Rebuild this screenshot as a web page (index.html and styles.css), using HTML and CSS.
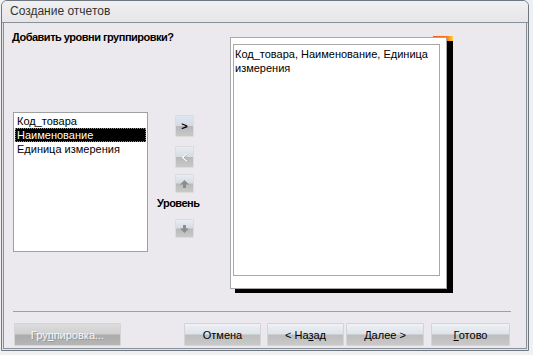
FILE: index.html
```html
<!DOCTYPE html>
<html lang="ru">
<head>
  <meta charset="UTF-8">
  <title>Создание отчетов</title>
  <link rel="stylesheet" href="styles.css">
</head>
<body>
  <div class="window">
    <div class="titlebar">Создание отчетов</div>
    <div class="client">
      <div class="main">
        <div class="fields">
          <div class="question">Добавить уровни группировки?</div>
          <ul class="listbox">
            <li>Код_товара</li>
            <li class="selected">Наименование</li>
            <li>Единица измерения</li>
          </ul>
        </div>
        <div class="controls">
          <button class="tool add">&gt;</button>
          <button class="tool remove">
            <svg width="8" height="9" viewBox="0 0 8 9"><path d="M6 1 L2 4.5 L6 8" fill="none" stroke="#fff" stroke-width="1.6"/><path d="M6.5 1.6 L2.9 4.5 L6.5 7.4" fill="none" stroke="#9a9a9a" stroke-width="0.8"/></svg>
          </button>
          <button class="tool up">
            <svg width="9" height="8" viewBox="0 0 9 8"><path d="M4.5 0 L9 4.5 L6 4.5 L6 8 L3 8 L3 4.5 L0 4.5 Z" fill="#8c8c8c"/></svg>
          </button>
          <div class="priority">Уровень</div>
          <button class="tool down">
            <svg width="9" height="8" viewBox="0 0 9 8"><path d="M4.5 8 L9 3.5 L6 3.5 L6 0 L3 0 L3 3.5 L0 3.5 Z" fill="#8c8c8c"/></svg>
          </button>
        </div>
        <div class="preview">
          <div class="page">
            <div class="group">Код_товара, Наименование, Единица измерения</div>
          </div>
        </div>
      </div>
      <div class="separator"></div>
      <div class="footer">
        <button class="btn grouping" disabled>Гру<u>п</u>пировка...</button>
        <button class="btn cancel">Отмена</button>
        <button class="btn back">&lt; На<u>з</u>ад</button>
        <button class="btn next"><u>Д</u>алее &gt;</button>
        <button class="btn finish"><u>Г</u>отово</button>
      </div>
    </div>
  </div>
</body>
</html>
```

FILE: styles.css
```css
body {
  margin: 0;
  background: #f0f0f0;
  font-family: "Liberation Sans", Arial, sans-serif;
  font-size: 11px;
  color: #000;
}
.window {
  margin-left: 1px;
  width: 528px;
  height: 351px;
  box-sizing: border-box;
  border: 1px solid #6e7780;
  border-radius: 6px 6px 0 0;
  background: #e4e5e8;
}
.titlebar {
  height: 21px;
  line-height: 21px;
  padding-left: 8px;
  font-size: 12px;
  color: #333;
  background: linear-gradient(#f0f0f2, #e6e6e9);
  border-bottom: 1px solid #8a9098;
  border-radius: 5px 5px 0 0;
}
.client {
  margin: 0 1px 1px 1px;
  height: 326px;
  box-sizing: border-box;
  border: 1px solid #8a9098;
  border-top: none;
  background: #ebe9ed;
}
.main {
  display: flex;
  align-items: flex-start;
  height: 288px;
  box-sizing: border-box;
  padding-top: 8px;
}
.fields {
  width: 144px;
  box-sizing: border-box;
  padding-left: 8px;
}
.question {
  font-weight: bold;
  letter-spacing: -0.5px;
  line-height: 13px;
  white-space: nowrap;
}
.listbox {
  list-style: none;
  margin: 68px 0 0 1px;
  padding: 1px;
  width: 135px;
  height: 140px;
  box-sizing: border-box;
  background: #fff;
  border: 1px solid #a0a0a0;
  line-height: 14px;
}
.listbox li {
  padding-left: 2px;
  white-space: nowrap;
}
.listbox .selected {
  background: #000;
  color: #fff;
  outline: 1px dotted #888;
  outline-offset: -1px;
}
.controls {
  width: 82px;
  display: flex;
  flex-direction: column;
  align-items: flex-start;
}
.tool {
  margin-left: 27px;
  width: 19px;
  height: 22px;
  padding: 0;
  border: 1px solid #dcdcdc;
  border-radius: 1px;
  background: linear-gradient(#e8edf2 0%, #d6dce3 48%, #b9b9b9 52%, #c9c9c9 100%);
  display: flex;
  align-items: center;
  justify-content: center;
  font-family: "Liberation Sans", Arial, sans-serif;
  font-size: 11px;
  font-weight: bold;
  color: #000;
}
.tool.add {
  margin-top: 84px;
  background: linear-gradient(#dde7f0 0%, #d3dce6 48%, #b8b8b8 52%, #c8c8c8 100%);
}
.tool.remove {
  margin-top: 9px;
}
.tool.up {
  margin-top: 6px;
  height: 19px;
}
.tool.down {
  margin-top: 9px;
  height: 19px;
}
.priority {
  margin: 4px 0 0 9px;
  font-weight: bold;
  letter-spacing: -0.5px;
  line-height: 13px;
}
.preview {
  position: relative;
  margin-top: 6px;
  width: 217px;
  height: 252px;
}
.preview::before {
  content: "";
  position: absolute;
  left: 5px;
  top: 3px;
  right: -6px;
  bottom: -4px;
  background: #000;
}
.preview::after {
  content: "";
  position: absolute;
  left: 203px;
  top: -1px;
  width: 20px;
  height: 5px;
  background: linear-gradient(to right, #f05a1e, #ff7a10 70%, #ffd040);
}
.page {
  position: relative;
  z-index: 1;
  height: 100%;
  box-sizing: border-box;
  background: #fff;
  border: 1px solid #a8a8a8;
  padding: 6px 6px 12px 2px;
}
.group {
  height: 100%;
  box-sizing: border-box;
  border: 1px solid #a8a8a8;
  padding: 2px 1px;
  line-height: 14px;
}
.separator {
  margin: 0 15px 0 9px;
  height: 1px;
  background: #a0a0a0;
}
.footer {
  display: flex;
  padding: 11px 0 0 10px;
}
.btn {
  height: 23px;
  width: 77px;
  padding: 0;
  border: 1px solid #d4d4d4;
  border-radius: 1px;
  background: linear-gradient(#eef1f5 0%, #dde3ea 48%, #bdbdbd 52%, #c9c9c9 100%);
  font-family: "Liberation Sans", Arial, sans-serif;
  font-size: 11px;
  color: #000;
}
.btn.grouping {
  width: 107px;
  color: #f8f8f8;
  background: linear-gradient(#dcdcdc 0%, #d0d0d0 48%, #ababab 52%, #b6b6b6 100%);
  text-shadow: 1px 1px 0 #9a9a9a;
}
.btn.cancel { margin-left: 63px; }
.btn.back { margin-left: 6px; }
.btn.next { margin-left: 2px; width: 78px; }
.btn.finish { margin-left: 7px; width: 79px; }
```
